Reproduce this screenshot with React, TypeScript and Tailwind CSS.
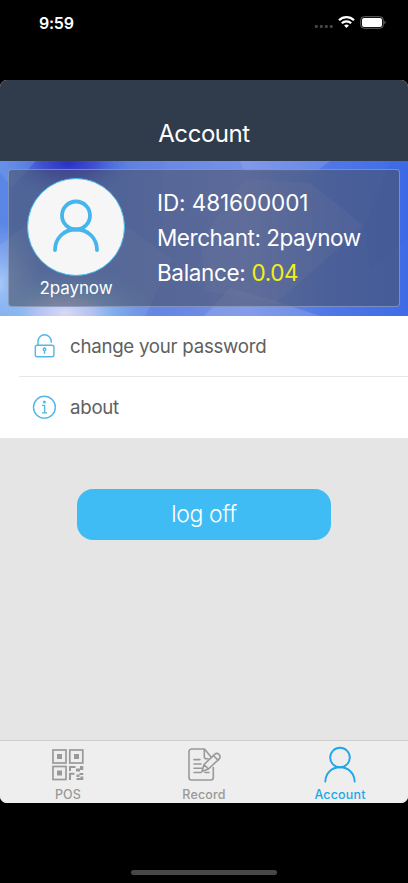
import type { ReactNode } from "react";

function StatusBar() {
  return (
    <div className="flex h-[80px] shrink-0 items-start justify-between pr-[22px] pl-[39px] text-white">
      <span className="pt-[11px] text-[16px] leading-6 font-semibold tracking-[-0.25px]">
        9:59
      </span>
      <div className="flex pt-[15px]">
        <svg width="20" height="14" viewBox="0 0 20 14" fill="#454545">
          <rect x="0.8" y="10" width="3" height="3" rx="1" />
          <rect x="5.8" y="10" width="3" height="3" rx="1" />
          <rect x="10.8" y="10" width="3" height="3" rx="1" />
          <rect x="15.8" y="10" width="3" height="3" rx="1" />
        </svg>
        <svg
          className="ml-[4px]"
          width="17"
          height="14"
          viewBox="0 0 17 14"
          fill="none"
          stroke="white"
          strokeWidth="2.2"
        >
          <path d="M1 5.3a10.6 10.6 0 0 1 15 0" />
          <path d="M3.8 8.3a6.6 6.6 0 0 1 9.4 0" />
          <path
            d="M8.5 13l-2.4-2.4a3.4 3.4 0 0 1 4.8 0z"
            fill="white"
            stroke="none"
          />
        </svg>
        <svg
          className="ml-[5px]"
          width="26"
          height="14"
          viewBox="0 0 26 14"
          fill="none"
        >
          <rect
            x="0.7"
            y="1.7"
            width="22.6"
            height="11.6"
            rx="3.5"
            stroke="#666"
          />
          <rect x="2" y="3" width="20" height="9" rx="2" fill="white" />
          <path d="M24.4 5.6c1.6.7 1.6 3.1 0 3.8z" fill="#666" />
        </svg>
      </div>
    </div>
  );
}

function BannerArt() {
  return (
    <svg
      className="absolute inset-0"
      width="408"
      height="155"
      viewBox="0 0 408 155"
    >
      <defs>
        <linearGradient id="base" x1="0" y1="0" x2="1" y2="0">
          <stop offset="0" stopColor="#5a86e6" />
          <stop offset="0.2" stopColor="#567de2" />
          <stop offset="0.4" stopColor="#6686e3" />
          <stop offset="0.6" stopColor="#7690e8" />
          <stop offset="0.8" stopColor="#5078e6" />
          <stop offset="1" stopColor="#3f6ce6" />
        </linearGradient>
        <radialGradient id="indigo">
          <stop offset="0" stopColor="#2a30c4" />
          <stop offset="0.4" stopColor="#383fc8" stopOpacity="0.75" />
          <stop offset="1" stopColor="#466fdd" stopOpacity="0" />
        </radialGradient>
        <radialGradient id="glow">
          <stop offset="0" stopColor="#d9d9f4" />
          <stop offset="0.3" stopColor="#c5cff4" stopOpacity="0.8" />
          <stop offset="0.5" stopColor="#94c8f2" stopOpacity="0.6" />
          <stop offset="1" stopColor="#77a5ee" stopOpacity="0" />
        </radialGradient>
        <radialGradient id="edge">
          <stop offset="0" stopColor="#a9ccf6" />
          <stop offset="1" stopColor="#8fb2f3" stopOpacity="0" />
        </radialGradient>
      </defs>
      <rect width="408" height="155" fill="url(#base)" />
      <ellipse cx="68" cy="2" rx="66" ry="34" fill="url(#indigo)" />
      <path d="M0 0h36L12 26 0 12z" fill="#86a8f0" opacity="0.3" />
      <path
        d="M0 84 32 60 126 65 172 98 145 155H0z"
        fill="#a3bbf2"
        opacity="0.2"
      />
      <ellipse cx="0" cy="125" rx="42" ry="65" fill="url(#edge)" />
      <ellipse cx="65" cy="152" rx="94" ry="46" fill="url(#glow)" />
      <path d="M163 0h88l-9 18-79 70z" fill="#7590e8" opacity="0.22" />
      <path
        d="M200 80 245 18 310 22 364 65 276 142 206 130z"
        fill="#a3b0ea"
        opacity="0.2"
      />
      <path d="M204 155 230 127 275 140 320 155z" fill="#a5b8ef" opacity="0.3" />
      <path d="M364 65 391 0h17v78l-38 31z" fill="#295bdc" opacity="0.12" />
      <path d="M240 0h90l-13 10h-73z" fill="#9baeed" opacity="0.3" />
    </svg>
  );
}

function PersonIcon() {
  return (
    <svg
      width="48"
      height="54"
      viewBox="0 0 48 54"
      fill="none"
      stroke="#45b5eb"
      strokeWidth="3.8"
      strokeLinecap="round"
    >
      <circle cx="24" cy="16.5" r="14" />
      <path d="M3 51C3 39 12 30.5 24 30.5S45 39 45 51" />
    </svg>
  );
}

function LockIcon() {
  return (
    <svg
      width="26"
      height="26"
      viewBox="0 0 26 26"
      fill="none"
      stroke="#51b8e7"
      strokeWidth="1.4"
    >
      <rect x="4.3" y="11.2" width="18.6" height="11.6" rx="2" />
      <path d="M7 11V7.3a6.6 6.6 0 0 1 13.2 0v1.5" />
      <circle cx="13.5" cy="15.3" r="1.3" />
      <path d="M13.5 16.6v3.2" />
    </svg>
  );
}

function InfoIcon() {
  return (
    <svg
      width="26"
      height="26"
      viewBox="0 0 26 26"
      fill="none"
      stroke="#51b8e7"
      strokeWidth="1.4"
    >
      <circle cx="13.4" cy="12.2" r="10.9" />
      <path d="M11 10.4H13.6v7.3M11 17.9h5" />
      <circle cx="13.4" cy="7" r="1.5" fill="#51b8e7" stroke="none" />
    </svg>
  );
}

function MenuRow({ icon, label }: { icon: ReactNode; label: string }) {
  return (
    <div className="flex h-full items-center pl-[31px]">
      {icon}
      <span className="ml-[13px] text-[18.7px] leading-6 tracking-[-0.27px] text-[#606060]">
        {label}
      </span>
    </div>
  );
}

function QrIcon() {
  return (
    <svg width="32" height="32" viewBox="0 0 32 32" fill="#999">
      <g fill="none" stroke="#999" strokeWidth="1.7">
        <rect x="1" y="1" width="13" height="13" />
        <rect x="17.8" y="1" width="13" height="13" />
        <rect x="1" y="17.5" width="13" height="13" />
      </g>
      <path d="M5 5h5v5H5zM22 5h5v5h-5zM5 21.5h5v5H5z" />
      <path d="M17 17h6.5v2H19v3h-2zM28 17h3.3v4H28zM24 19.5h4v3h-4zM17 23.8h5.5v2H19V31h-2zM27.5 24h3.8v2h-3.8zM24.5 25.5h3V28h-3zM24.5 29h4v-1.5h2.8V31h-6.8z" />
    </svg>
  );
}

function RecordIcon() {
  return (
    <svg
      width="36"
      height="36"
      viewBox="0 0 36 36"
      fill="none"
      stroke="#999"
      strokeWidth="1.6"
      strokeLinecap="round"
      strokeLinejoin="round"
    >
      <path d="M25.5 10.5 18.5 2H5.5A2.5 2.5 0 0 0 3 4.5v26A2.5 2.5 0 0 0 5.5 33h19.3a2.5 2.5 0 0 0 2.5-2.5v-10" />
      <path d="M18.3 2.5v7.2a2 2 0 0 0 2 2H22" />
      <path d="M8 12.6h6M8 17h7M8 21.3h7.5M8 25.5h7.2M19 25.5h4" />
      <path d="m16 24.5 2-7L28.6 7.3c3.2-2.5 7 1.4 4.6 4.6L22.4 22zM27.4 8.5l4.8 4.9M18 17.5l4.4 4.5" />
    </svg>
  );
}

function TabPersonIcon() {
  return (
    <svg
      width="34"
      height="38"
      viewBox="0 0 34 38"
      fill="none"
      stroke="#21a7e8"
      strokeWidth="1.9"
      strokeLinecap="round"
    >
      <circle cx="17" cy="11.5" r="9.8" />
      <path d="M2.3 35.5C2.6 27 8.8 21.3 17 21.3s14.4 5.7 14.7 14.2" />
    </svg>
  );
}

function Tab({
  icon,
  label,
  active,
}: {
  icon: ReactNode;
  label: string;
  active?: boolean;
}) {
  return (
    <div className="flex flex-1 flex-col items-center pt-[4px]">
      <div className="mb-[2px] flex h-[40px] shrink-0 items-center">{icon}</div>
      <span
        className={
          active
            ? "text-[12.5px] leading-4 font-medium tracking-[0.15px] text-[#21a7e8]"
            : "text-[12.5px] leading-4 font-medium tracking-[0.15px] text-[#999]"
        }
      >
        {label}
      </span>
    </div>
  );
}

export default function App() {
  return (
    <main className="flex h-[883px] w-[408px] flex-col overflow-hidden bg-black font-['Inter','Liberation_Sans',sans-serif]">
      <StatusBar />

      <div className="flex h-[723px] shrink-0 flex-col overflow-hidden rounded-[7px] bg-[#e5e5e5]">
        <header className="flex h-[81px] shrink-0 items-end justify-center bg-[#303c4b] pb-[11px]">
          <h1 className="text-[24px] leading-8 font-normal tracking-[-0.45px] text-white">
            Account
          </h1>
        </header>

        <section className="relative h-[155px] shrink-0 p-[8px] pb-[9px]">
          <BannerArt />
          <div className="relative flex h-full rounded-[4px] border border-[#a0b0d8]/60 bg-[#484f60]/58">
            <div className="ml-[18px] flex w-[98px] flex-col items-center pt-[8px]">
              <div className="flex h-[98px] w-[98px] shrink-0 items-center justify-center rounded-full border border-[#45b5eb] bg-[#f6f6f6] pb-[3px]">
                <PersonIcon />
              </div>
              <span className="pt-px text-[17px] leading-[22px] tracking-[-0.1px] text-white">
                2paynow
              </span>
            </div>
            <div className="ml-[32px] flex flex-col pt-[15px] text-[22.5px] leading-[35px] whitespace-nowrap text-white">
              <span className="tracking-[-0.1px]">ID: 481600001</span>
              <span className="tracking-[-0.45px]">Merchant: 2paynow</span>
              <span className="tracking-[-0.35px]">
                Balance: <span className="text-[#f5ef18]">0.04</span>
              </span>
            </div>
          </div>
        </section>

        <section className="h-[122px] shrink-0 bg-white">
          <div className="h-[60px] pt-px">
            <MenuRow icon={<LockIcon />} label="change your password" />
          </div>
          <div className="ml-[19px] h-px bg-[#e6e6e6]" />
          <div className="h-[61px]">
            <MenuRow icon={<InfoIcon />} label="about" />
          </div>
        </section>

        <div className="flex-1 px-[77px] pt-[51px]">
          <button className="h-[51px] w-full rounded-[16px] bg-[#40bcf4] text-[23px] font-light tracking-[-0.35px] text-white">
            log off
          </button>
        </div>

        <nav className="flex h-[63px] shrink-0 border-t border-[#cfcfcf] bg-[#eee]">
          <Tab icon={<QrIcon />} label="POS" />
          <Tab icon={<RecordIcon />} label="Record" />
          <Tab icon={<TabPersonIcon />} label="Account" active />
        </nav>
      </div>

      <div className="flex flex-1 items-end justify-center pb-[8px]">
        <div className="h-[5px] w-[146px] rounded-full bg-[#484848]" />
      </div>
    </main>
  );
}
